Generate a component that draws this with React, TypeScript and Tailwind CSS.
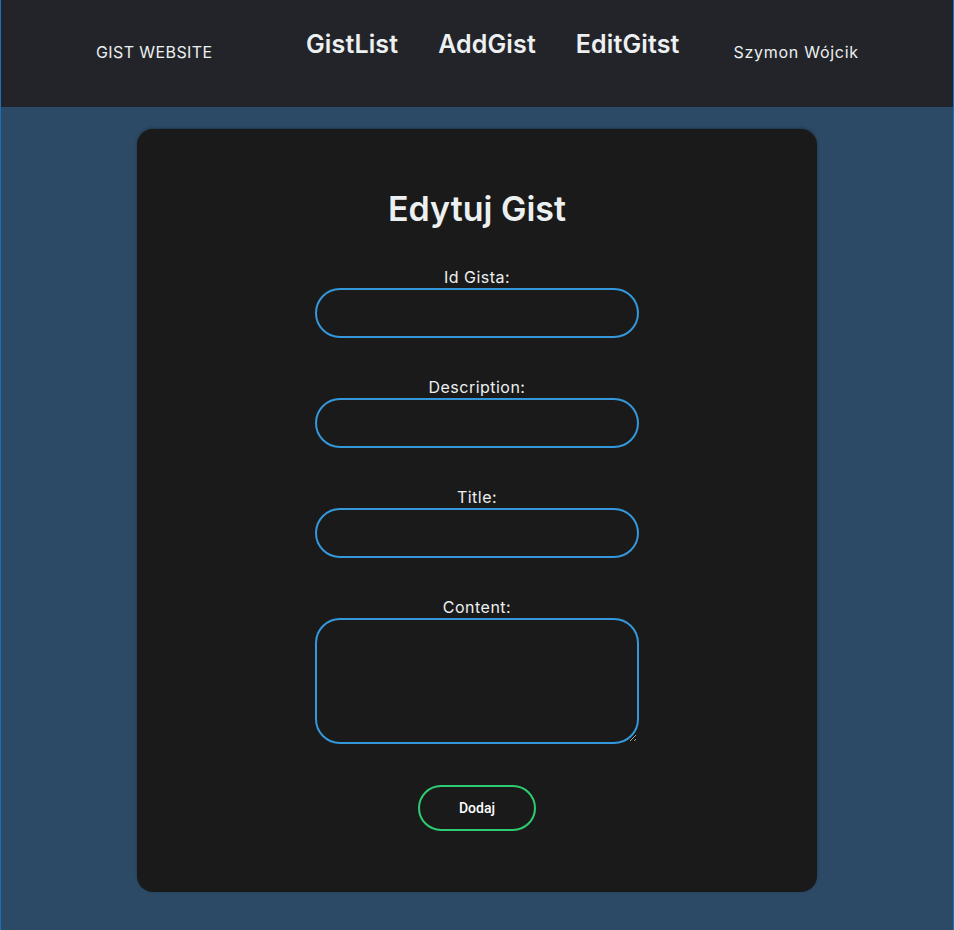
import React from "react";

const font = { fontFamily: "Inter, 'Noto Sans', sans-serif" };

function Field({ label, area }: { label: string; area?: boolean }) {
  return (
    <div className="flex flex-col items-center">
      <label className="text-[16px] leading-[20px] tracking-[0.03em] text-[#ecf0f1]">{label}</label>
      {area ? (
        <textarea className="mt-[1px] h-[126px] w-[324px] rounded-[25px] border-2 border-[#3498db] bg-transparent outline-none" />
      ) : (
        <input className="mt-[1px] h-[50px] w-[324px] rounded-full border-2 border-[#3498db] bg-transparent outline-none" />
      )}
    </div>
  );
}

export default function App() {
  return (
    <div
      className="min-h-screen w-full border-x border-[#1f6fba] bg-[#2c4a66] pb-[39px]"
      style={font}
    >
      <header className="flex h-[107px] items-start bg-[#232429] text-[#ecf0f1]">
        <div className="ml-[95px] mt-[42px] w-[210px] text-[16px] leading-[20px] tracking-[0.025em]">
          GIST WEBSITE
        </div>
        <nav className="mt-[28px] flex gap-[40px] text-[25px] font-semibold leading-[32px] tracking-[0.005em]">
          <a>GistList</a>
          <a>AddGist</a>
          <a>EditGitst</a>
        </nav>
        <div className="ml-[54px] mt-[42px] text-[16px] leading-[20px] tracking-[0.045em]">
          Szymon Wójcik
        </div>
      </header>
      <main className="flex justify-center pt-[22px]">
        <div className="flex w-[680px] flex-col items-center rounded-[16px] bg-[#1a1a1a] pb-[61px] pt-[60px] shadow-[0_-1px_3px_rgba(0,0,0,0.3)]">
          <h1 className="text-[34px] font-semibold leading-[40px] text-[#ecf0f1]">Edytuj Gist</h1>
          <form className="mt-[38px] flex flex-col gap-[39px]">
            <Field label="Id Gista:" />
            <Field label="Description:" />
            <Field label="Title:" />
            <Field label="Content:" area />
            <div className="mt-[2px] flex justify-center">
              <button
                type="button"
                className="h-[46px] w-[118px] rounded-full border-2 border-[#2ecc71] bg-transparent text-[14px] font-medium text-white"
                style={{ fontFamily: "Roboto, 'Liberation Sans', sans-serif" }}
              >
                Dodaj
              </button>
            </div>
          </form>
        </div>
      </main>
    </div>
  );
}
